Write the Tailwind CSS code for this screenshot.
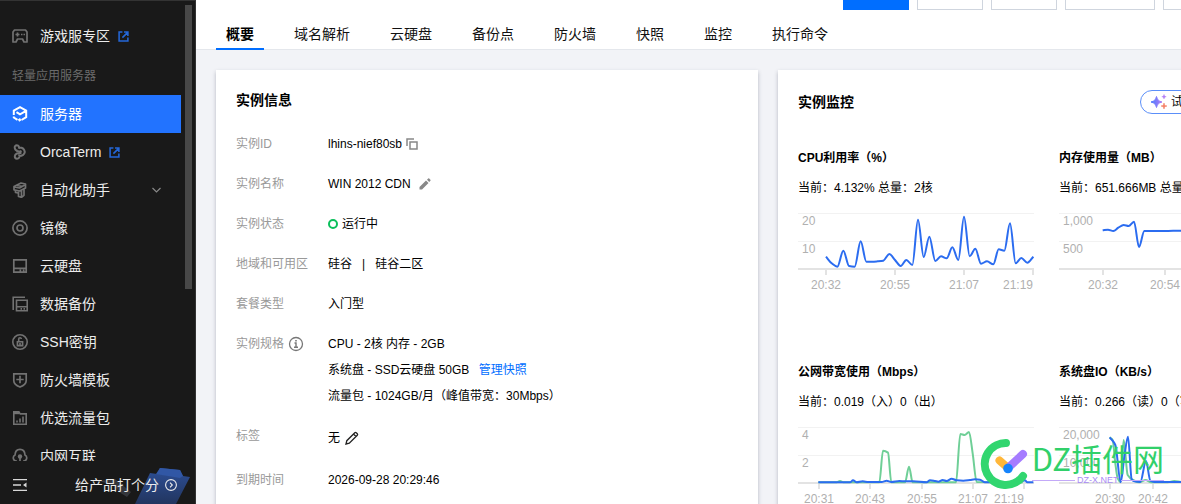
<!DOCTYPE html>
<html lang="zh-CN">
<head>
<meta charset="utf-8">
<title>轻量应用服务器 - 概要</title>
<script src="https://cdn.jsdelivr.net/npm/@tailwindcss/browser@4"></script>
</head>
<body class="flex h-screen overflow-hidden bg-[#f2f3f7] font-['Liberation_Sans','Noto_Sans_CJK_SC',sans-serif] text-xs text-black">

<aside class="relative flex w-[196px] shrink-0 flex-col border-t border-r border-[#333333] bg-[#191919] text-sm text-[#ececec]">
  <nav class="min-h-0 flex-1 overflow-hidden pt-4">
    <a href="#" class="flex h-[38px] items-center px-3">
      <svg class="mr-3 size-4 text-[#727272]" viewBox="0 0 16 16" fill="none" stroke="currentColor" stroke-width="1.700"><path d="M2.500 2h11L15 4v10h-3l-1.500-3h-5L4 14H1V4z" stroke-linejoin="round"/><path d="M3.500 6.500h4M5.500 4.500v4M9 6.500h1.500M11.500 6.500H13"/></svg>
      游戏服专区
      <svg class="ml-2 size-[11px] text-[#2467d8]" viewBox="0 0 10 10" fill="none" stroke="currentColor" stroke-width="1.400"><path d="M4 1H1v8h8V6M5.500 1H9v3.500M9 1 4 6"/></svg>
    </a>
    <h2 class="flex h-10 items-center px-3 pt-px text-xs text-[#6b6b6b]">轻量应用服务器</h2>
    <a href="#" aria-current="page" class="mr-3.5 flex h-[38px] items-center bg-[#2273ff] px-3 text-white">
      <svg class="mr-3 size-4" viewBox="0 0 16 16" fill="none" stroke="currentColor" stroke-width="2"><path d="M1.800 9V4.600L8 1.200l6.200 3.400v6.600L9.500 14M4.500 6.200 8 8.400l6-3.500M1.800 10.500v1L5.500 13.800"/><path d="m6.500 14.600 2.200-1.400" stroke-width="2.600"/></svg>
      服务器
    </a>
    <a href="#" class="flex h-[38px] items-center px-3">
      <svg class="mr-3 size-4 text-[#727272]" viewBox="0 0 16 16" fill="none" stroke="currentColor" stroke-width="2" stroke-linejoin="round"><path d="M5.500 6.800C2 6 1.800 1.300 4.800 1.200c2 0 2.800 1.800 1.900 3.600M3.200 5.500c2 2.200 4.300 2.500 6.300 1.300M7.500 3.500C11 3.500 12.500 6 12.800 8c-.5 2.500-2.500 4-5.500 4M9.500 9.200C6 8.500 3 9.700 2.800 12.200c0 3.200 4 3.200 4.700.5.200-1-.2-1.700-1-2.200"/></svg>
      OrcaTerm
      <svg class="ml-2 size-[11px] text-[#2467d8]" viewBox="0 0 10 10" fill="none" stroke="currentColor" stroke-width="1.400"><path d="M4 1H1v8h8V6M5.500 1H9v3.500M9 1 4 6"/></svg>
    </a>
    <a href="#" class="flex h-[38px] items-center px-3">
      <svg class="mr-3 size-4 text-[#727272]" viewBox="0 0 16 16" fill="none" stroke="currentColor" stroke-width="1.700" stroke-linejoin="round"><path d="M2 4.500 9 1l4.500 1v4L7.500 9 2 7.800zM2.300 5 7.500 6l6-3.500M3.500 7.500v3l2.500.5M6.500 9v5.500l3 .8 2.500-2V7.500M9.500 15V8.500M5 3.500l5 .8"/></svg>
      自动化助手
      <svg class="mr-[22px] ml-auto h-[6px] w-[9px] text-[#888888]" viewBox="0 0 9 6" fill="none" stroke="currentColor" stroke-width="1.200"><path d="m.5 1 4 4 4-4"/></svg>
    </a>
    <a href="#" class="flex h-[38px] items-center px-3">
      <svg class="mr-3 size-4 text-[#727272]" viewBox="0 0 16 16" fill="none" stroke="currentColor" stroke-width="1.700"><circle cx="8" cy="8" r="7.100"/><circle cx="8" cy="8" r="3"/></svg>
      镜像
    </a>
    <a href="#" class="flex h-[38px] items-center px-3">
      <svg class="mr-3 size-4 text-[#727272]" viewBox="0 0 16 16" fill="none" stroke="currentColor" stroke-width="1.700"><path d="M1.800 1.800h12.400v12.400H1.800zM1.800 10.300h12.400M7.500 12.400h1.700M10.800 12.400h1.700"/></svg>
      云硬盘
    </a>
    <a href="#" class="flex h-[38px] items-center px-3">
      <svg class="mr-3 size-4 text-[#727272]" viewBox="0 0 16 16" fill="none" stroke="currentColor" stroke-width="1.600"><path d="M13 1.200H1.200V14M4.500 4.200h10.700v10.600H4.500zM4.500 10.800h10.700M8.500 12.900H10M11.500 12.900H13"/></svg>
      数据备份
    </a>
    <a href="#" class="flex h-[38px] items-center px-3">
      <svg class="mr-3 size-4 text-[#727272]" viewBox="0 0 16 16" fill="none" stroke="currentColor" stroke-width="1.600"><circle cx="8" cy="8" r="7.200"/><path d="M5.400 7.700h5.200v3.900H5.400zM6.700 7.500V5.200c0-1.800 2.600-1.800 2.600-.2M8 9v1.700"/></svg>
      SSH密钥
    </a>
    <a href="#" class="flex h-[38px] items-center px-3">
      <svg class="mr-3 size-4 text-[#727272]" viewBox="0 0 16 16" fill="none" stroke="currentColor" stroke-width="1.700"><path d="M1.800 1.800h12.400v6.900c0 3-2.700 5-6.200 6.300-3.500-1.300-6.200-3.300-6.200-6.300zM8 3.800v7.400M4.300 7.500h7.400"/></svg>
      防火墙模板
    </a>
    <a href="#" class="flex h-[38px] items-center px-3">
      <svg class="mr-3 size-4 text-[#727272]" viewBox="0 0 16 16" fill="none" stroke="currentColor" stroke-width="1.600"><path d="M1.800 1.900h5l1.500 2h5.900v10.300H1.800z"/><path d="M1 1.200h6.200v3H1z" fill="currentColor" stroke="none"/><path d="M5 12.500v-2M8 12.500v-4M11 12.500v-6"/></svg>
      优选流量包
    </a>
    <a href="#" class="flex h-[38px] items-center px-3">
      <svg class="mr-3 size-4 text-[#727272]" viewBox="0 0 16 16" fill="none" stroke="currentColor" stroke-width="1.700"><path d="M5 13H4a3.200 3.200 0 0 1-1-6C3.200 3.300 5 1.400 8 1.400S12.800 3.300 13 7a3.200 3.200 0 0 1-1 6h-1"/><circle cx="8" cy="8.500" r="2.200" fill="currentColor" stroke="none"/><path d="M8 8v7"/></svg>
      内网互联
    </a>
  </nav>
  <div class="absolute top-1 right-[3px] h-[284px] w-[7px] bg-[#484848]"></div>
  <footer class="relative flex h-[43px] shrink-0 items-center px-3 pt-1">
    <svg class="absolute right-0 bottom-0 h-[43px] w-[110px]" viewBox="0 0 110 43" aria-hidden="true">
      <defs><linearGradient id="folder" x1="0" y1="0" x2="0" y2="1"><stop offset="0" stop-color="#2d4f97"/><stop offset="1" stop-color="#22355f"/></linearGradient></defs>
      <path d="m14 20 16-2 16 13-4 5-8-5-4-6z" fill="#34363b"/>
      <path d="m50 43 15-31 7 1 3-6 20 2 3 6 7 1-14 27z" fill="url(#folder)"/>
      <path d="m71 13 4-6 20 2 3 6-3 2z" fill="#3157a5"/>
    </svg>
    <button type="button" aria-label="收起菜单" class="relative">
      <svg class="block size-4 text-[#d8d8d8]" viewBox="0 0 16 16" fill="none" stroke="currentColor" stroke-width="1.300"><path d="M1 2.700h14M1 8h8M1 13.300h14"/><path d="M14.500 5.500v5L11 8z" fill="currentColor" stroke="none"/></svg>
    </button>
    <a href="#" class="relative ml-auto flex items-center gap-1.5 pr-1.5">给产品打个分
      <svg class="size-3" viewBox="0 0 12 12" fill="none" stroke="currentColor" stroke-width="1.100"><circle cx="6" cy="6" r="5.400"/><path d="m5 3.700 2.300 2.300L5 8.300"/></svg>
    </a>
  </footer>
</aside>

<main class="min-w-0 flex-1 overflow-hidden">
  <header class="border-b border-[#e4e7ec] bg-white">
    <div class="flex h-[10px] items-end gap-2 overflow-hidden pl-[647px]">
      <button type="button" aria-label="登录" class="h-[30px] w-[66px] shrink-0 bg-[#006eff]"></button>
      <button type="button" aria-label="关机" class="h-[30px] w-[66px] shrink-0 border border-[#cfd5de]"></button>
      <button type="button" aria-label="重启" class="h-[30px] w-[66px] shrink-0 border border-[#cfd5de]"></button>
      <button type="button" aria-label="重置密码" class="h-[30px] w-[90px] shrink-0 border border-[#cfd5de]"></button>
      <button type="button" aria-label="更多操作" class="h-[30px] w-[90px] shrink-0 border border-[#cfd5de]"></button>
    </div>
    <nav class="-mb-px flex h-10 gap-5 px-5 pt-2.5 text-sm leading-7 text-[#111111]">
      <a href="#" aria-current="page" class="border-b-2 border-[#006eff] px-2.5 font-bold text-black">概要</a>
      <a href="#" class="px-2.5">域名解析</a>
      <a href="#" class="px-2.5">云硬盘</a>
      <a href="#" class="px-2.5">备份点</a>
      <a href="#" class="px-2.5">防火墙</a>
      <a href="#" class="px-2.5">快照</a>
      <a href="#" class="px-2.5">监控</a>
      <a href="#" class="px-2.5">执行命令</a>
    </nav>
  </header>

  <div class="flex gap-5 p-5">
    <section class="w-[542px] shrink-0 bg-white p-5 shadow-[0_2px_4px_rgba(54,58,80,0.32)]">
      <h2 class="text-sm leading-5 font-bold">实例信息</h2>
      <dl class="mt-6 grid grid-cols-[92px_1fr] gap-y-5 leading-5 [&>dt]:text-[#999999]">
        <dt>实例ID</dt>
        <dd class="flex items-center gap-1">lhins-nief80sb
          <button type="button" aria-label="复制"><svg class="size-3 text-[#888888]" viewBox="0 0 12 12" fill="none" stroke="currentColor" stroke-width="1.500"><path d="M1 8V1h7M4 4h7v7H4z"/></svg></button>
        </dd>
        <dt>实例名称</dt>
        <dd class="flex items-center gap-2">WIN 2012 CDN
          <button type="button" aria-label="编辑名称"><svg class="size-3 text-[#888888]" viewBox="0 0 12 12" fill="currentColor"><path d="M.5 11.500V9L7 2.500 9.500 5 3 11.500zM8 1.800 9.200.6a.7.700 0 0 1 1 0l1.200 1.200a.7.700 0 0 1 0 1L10.200 4z"/></svg></button>
        </dd>
        <dt>实例状态</dt>
        <dd class="flex items-center gap-1"><span class="size-[10px] rounded-full border-2 border-[#0abf5b]"></span>运行中</dd>
        <dt>地域和可用区</dt>
        <dd class="flex gap-2.5"><span>硅谷</span><span>|</span><span>硅谷二区</span></dd>
        <dt>套餐类型</dt>
        <dd>入门型</dd>
        <dt class="flex h-5 items-center gap-1">实例规格
          <svg class="size-4 text-[#777777]" viewBox="0 0 16 16" fill="none" stroke="currentColor"><circle cx="8" cy="8" r="6.500" stroke-width="1.300"/><path d="M6.500 7H8v4M6 11.300h4M7.200 4.800h1.600" stroke-width="1.400"/></svg>
        </dt>
        <dd class="flex flex-col gap-1.5">
          <p>CPU - 2核 内存 - 2GB</p>
          <p>系统盘 - SSD云硬盘 50GB <a href="#" class="ml-1.5 text-[#006eff]">管理快照</a></p>
          <p>流量包 - 1024GB/月（峰值带宽：30Mbps）</p>
        </dd>
        <dt>标签</dt>
        <dd class="flex h-6 items-center gap-1">无
          <button type="button" aria-label="编辑标签"><svg class="size-4 text-[#222222]" viewBox="0 0 16 16" fill="none" stroke="currentColor" stroke-width="1.300"><path d="M2 14l.8-3.300 8-8a1 1 0 0 1 1.400 0l1.100 1.100a1 1 0 0 1 0 1.400l-8 8zM9.500 4l2.500 2.500"/></svg></button>
        </dd>
        <dt>到期时间</dt>
        <dd>2026-09-28 20:29:46</dd>
      </dl>
    </section>

    <section class="w-[537px] shrink-0 bg-white p-5 shadow-[0_2px_4px_rgba(54,58,80,0.32)]">
      <div class="flex h-6 items-center justify-between">
        <h2 class="text-sm font-bold">实例监控</h2>
        <button type="button" class="flex h-6 w-[155px] items-center gap-1 rounded-full border border-[#5b8ff9] pl-2.5">
          <svg class="size-4" viewBox="0 0 16 16" aria-hidden="true"><defs><linearGradient id="spark" x1="0" y1="0" x2="1" y2="0"><stop offset="0" stop-color="#4d7cff"/><stop offset="1" stop-color="#b07cf5"/></linearGradient></defs><path d="M5.500 2.500C6.700 6.300 7.300 6.800 11 8c-3.700 1.200-4.300 1.700-5.500 5.500C4.300 9.700 3.700 9.200 0 8c3.700-1.200 4.300-1.700 5.500-5.500z" fill="url(#spark)" stroke="url(#spark)"/><path d="M13 .5c.4 1.600.6 1.800 2.200 2.200-1.600.4-1.800.6-2.200 2.200-.4-1.600-.6-1.800-2.200-2.200C12.400 2.300 12.600 2.100 13 .5z" fill="#b07cf5" stroke="#b07cf5" stroke-width=".5"/><path d="M13 9c.6 2.200.8 2.500 3 3-2.200.6-2.400.8-3 3-.6-2.200-.8-2.400-3-3 2.200-.5 2.400-.8 3-3z" fill="#f5846c" stroke="#f5846c" stroke-width=".6"/></svg>
          试用
        </button>
      </div>
      <div class="mt-[34px] grid grid-cols-2 gap-x-[25px] gap-y-16 leading-5">
        <article>
          <h3 class="font-bold">CPU利用率（%）</h3>
          <p class="my-2.5 whitespace-nowrap">当前：4.132% 总量：2核</p>
          <svg data-chart="cpu" class="block h-[90px] w-[236px]" viewBox="0 0 236 90"></svg>
        </article>
        <article>
          <h3 class="font-bold">内存使用量（MB）</h3>
          <p class="my-2.5 whitespace-nowrap">当前：651.666MB 总量：2GB</p>
          <svg data-chart="memory" class="block h-[90px] w-[236px]" viewBox="0 0 236 90"></svg>
        </article>
        <article>
          <h3 class="font-bold">公网带宽使用（Mbps）</h3>
          <p class="my-2.5 whitespace-nowrap">当前：0.019（入）0（出）</p>
          <svg data-chart="network" class="block h-[90px] w-[236px]" viewBox="0 0 236 90"></svg>
        </article>
        <article>
          <h3 class="font-bold">系统盘IO（KB/s）</h3>
          <p class="my-2.5 whitespace-nowrap">当前：0.266（读）0（写）</p>
          <svg data-chart="disk" class="block h-[90px] w-[236px]" viewBox="0 0 236 90"></svg>
        </article>
      </div>
    </section>
  </div>
</main>

<div class="pointer-events-none absolute right-[17px] bottom-[14px] flex items-center">
  <svg class="size-[52px]" viewBox="0 0 52 52" fill="none" stroke-linecap="round" stroke-width="8"><path d="M26 5A21 21 0 1 0 43 38" stroke="#31d66f"/><path d="M19.500 22.500 28 30" stroke="#ffb73a"/><path d="M43 16 28 30" stroke="#a57cff"/><circle cx="28" cy="30.500" r="4.800" fill="#1684fc"/></svg>
  <div class="flex flex-col">
    <span class="font-['Noto_Sans_CJK_SC',sans-serif] text-[31px] leading-8 text-[#31d06a]">DZ插件网</span>
    <span class="flex items-center gap-0.5 text-[9px] leading-3 text-[#a98bf5]"><i class="h-px flex-1 bg-[#c3a9f8]"></i>DZ-X.NET<i class="h-px flex-1 bg-[#c3a9f8]"></i></span>
  </div>
</div>

<script>
const BLUE = '#2b6cf0', GREEN = '#6fcf97';
// Series points are stored in thirds of a pixel, relative to (ox, oy).
const charts = {
  cpu: { ox: 54, oy: 384, y: ['20', '10'], ticks: [[28, '20:32'], [97, '20:55'], [166, '21:07'], [235, '21:19']], series: [
    [BLUE, [138,530,155,550,172,560,190,512,207,558,224,560,242,484,259,545,276,545,293,544,310,542,328,522,345,540,362,558,379,540,397,555,414,419,431,531,448,470,466,543,483,529,500,535,517,502,535,540,552,410,569,529,586,506,603,551,621,544,640,553,656,508,673,512,690,430,707,550,724,534,742,548,760,530]]] },
  memory: { ox: 84, oy: 384, y: ['1,000', '500'], ticks: [[44, '20:32'], [106, '20:54'], [168, '21:06'], [235, '21:19']], series: [
    [BLUE, [215,451,231,449,247,453,262,443,278,435,293,438,309,425,324,501,340,453,356,453,400,453,453,452,790,452]]] },
  network: { ox: 54, oy: 216, y: ['4', '2'], ticks: [[21, '20:31'], [72, '20:43'], [124, '20:55'], [175, '21:07'], [226, '21:19']], series: [
    [GREEN, [115,397,170,397,180,393,190,397,298,397,309,302,324,308,334,397,375,397,387,350,398,397,528,397,541,252,554,255,567,246,578,310,590,396,728,397]],
    [BLUE, [115,397,210,397,219,391,230,397,248,394,265,396,305,396,320,392,334,396,358,393,375,394,400,394,440,397,450,391,465,393,475,395,488,390,500,393,515,386,530,391,550,392,570,390,585,388,600,389,615,397,700,397,725,394,735,391,742,397,760,397]]] },
  disk: { ox: 264, oy: 216, y: ['20,000', '10,000'], ticks: [[51, '20:30'], [94, '20:42'], [137, '20:55'], [180, '21:07'], [223, '21:19']], series: [
    [GREEN, [416,262,425,270,433,340,440,385,449,396,458,270,470,375,486,390,505,397,524,390,540,397,590,397,610,393,633,396,970,397]],
    [BLUE, [416,262,433,285,449,397,460,320,471,260,482,388,490,394,508,396,525,333,538,392,550,396,970,397]]] }
};

// Monotone cubic interpolation, so that the line never overshoots a point.
function linePath(flat, ox, oy) {
  const p = [];
  for (let i = 0; i < flat.length; i += 2) p.push([(flat[i] - ox) / 3, (flat[i + 1] - oy) / 3]);
  const s = p.slice(1).map((q, i) => (q[1] - p[i][1]) / (q[0] - p[i][0]));
  const m = p.map((_, i) => {
    if (i === 0) return s[0];
    if (i === p.length - 1) return s[i - 1];
    return s[i - 1] * s[i] <= 0 ? 0 : 2 * s[i - 1] * s[i] / (s[i - 1] + s[i]);
  });
  let d = `M${p[0]}`;
  for (let i = 1; i < p.length; i++) {
    const h = (p[i][0] - p[i - 1][0]) / 3;
    d += `C${p[i - 1][0] + h} ${p[i - 1][1] + m[i - 1] * h} ${p[i][0] - h} ${p[i][1] - m[i] * h} ${p[i]}`;
  }
  return d;
}

for (const svg of document.querySelectorAll('[data-chart]')) {
  const c = charts[svg.dataset.chart];
  let out = '<path d="M0 5.500H236M0 33.500H236" stroke="#f2f2f2" stroke-width="1"/><path d="M0 61H236" stroke="#e3e3e3" stroke-width="2"/>';
  c.y.forEach((t, i) => out += `<text x="4" y="${17 + i * 28}" font-size="12" fill="#b0b0b0">${t}</text>`);
  c.ticks.forEach(([x, t]) => {
    const anchor = x > 220 ? 'end' : 'middle';
    out += `<path d="M${x} 61v6" stroke="#e3e3e3" stroke-width="2"/><text x="${x}" y="81" text-anchor="${anchor}" font-size="12" fill="#b0b0b0">${t}</text>`;
  });
  c.series.forEach(([color, pts]) => out += `<path d="${linePath(pts, c.ox, c.oy)}" fill="none" stroke="${color}" stroke-width="2" stroke-linejoin="round"/>`);
  svg.innerHTML = out;
}
</script>
</body>
</html>
